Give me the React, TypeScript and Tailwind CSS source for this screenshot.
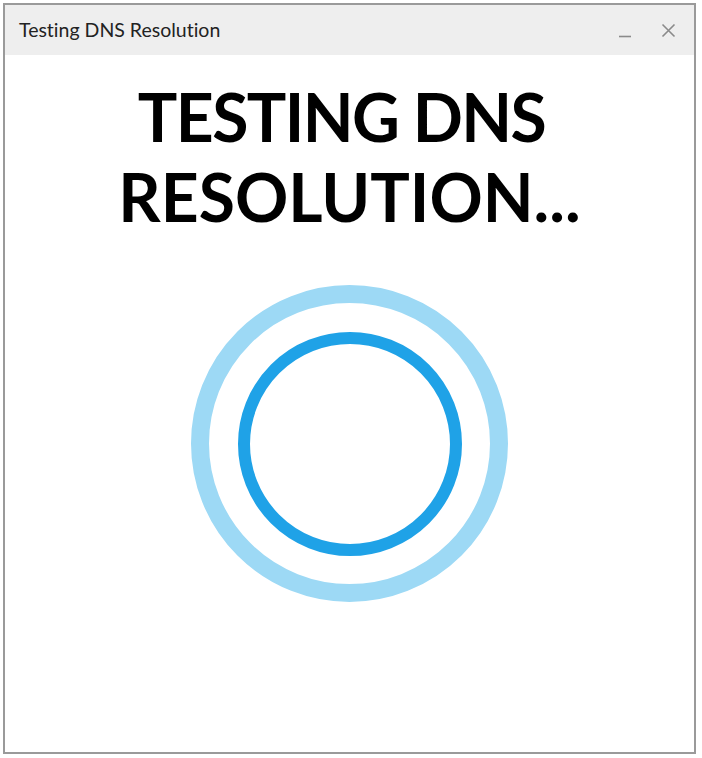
export default function App() {
  return (
    <div className="w-[702px] h-[758px] bg-white pt-[3px] pl-[3px]">
      <div className="w-[693px] h-[751px] border-2 border-[#9a9a9a] flex flex-col bg-white">
        {/* Title bar */}
        <div className="h-[50px] bg-[#eeeeee] flex items-center pl-[14px] pr-[18px] shrink-0">
          <span className="text-[19.5px] text-[#222] font-['Lato',sans-serif] [font-variant-ligatures:none] -mt-[1px]">
            Testing DNS Resolution
          </span>
          <div className="ml-auto flex items-center gap-[29px]">
            <svg width="14" height="16" viewBox="0 0 14 16" className="mt-[2px]">
              <line x1="1" y1="13.5" x2="13" y2="13.5" stroke="#8a8a8a" strokeWidth="1.6" />
            </svg>
            <svg width="15" height="15" viewBox="0 0 15 15">
              <path d="M1.5 1.5 L13.5 13.5 M13.5 1.5 L1.5 13.5" stroke="#8a8a8a" strokeWidth="1.6" />
            </svg>
          </div>
        </div>

        {/* Content */}
        <div className="flex-1 flex flex-col items-center pt-[22px]">
          <h1 className="font-['Lato',sans-serif] font-bold text-[66px] leading-[80px] text-black text-center [font-variant-ligatures:none]">
            <span className="block tracking-[-1.6px] pr-[16px]">TESTING DNS</span>
            <span className="block">RESOLUTION...</span>
          </h1>

          <div className="mt-[48px] w-[317px] h-[317px] rounded-full border-[18px] border-[#9dd9f5] flex items-center justify-center">
            <div className="w-[224px] h-[224px] rounded-full border-[12px] border-[#1fa2e7]"></div>
          </div>
        </div>
      </div>
    </div>
  );
}
